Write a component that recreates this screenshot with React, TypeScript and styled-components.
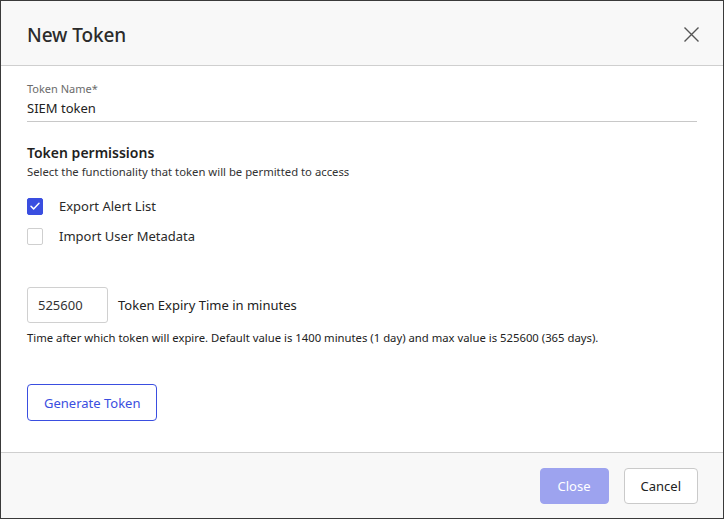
import React, { useState } from "react";
import styled, { createGlobalStyle } from "styled-components";

const GlobalStyle = createGlobalStyle`
  html, body {
    margin: 0;
    padding: 0;
    background: #ffffff;
  }
  body {
    font-family: "Noto Sans", "Open Sans", sans-serif;
    color: #222;
  }
`;

const Dialog = styled.div`
  box-sizing: border-box;
  width: 724px;
  height: 519px;
  border: 1px solid #3a3a3a;
  display: flex;
  flex-direction: column;
  background: #fff;
`;

const Header = styled.header`
  box-sizing: border-box;
  height: 65px;
  flex: none;
  background: #f8f8f8;
  border-bottom: 1px solid #cfcfcf;
  display: flex;
  align-items: center;
  justify-content: space-between;
  padding: 3px 20px 0 26px;
`;

const Title = styled.h1`
  margin: 0;
  font-size: 19px;
  font-weight: 500;
  color: #2b2b2b;
  letter-spacing: -0.1px;
`;

const CloseIcon = styled.button`
  border: none;
  background: transparent;
  padding: 0;
  width: 24px;
  height: 24px;
  display: flex;
  align-items: center;
  justify-content: center;
  cursor: pointer;
`;

const Body = styled.main`
  flex: 1;
  padding: 16px 26px 0 26px;
`;

const FieldLabel = styled.label`
  display: block;
  font-size: 11px;
  color: #6b6b6b;
  line-height: 14px;
`;

const UnderlineInput = styled.input`
  display: block;
  width: 100%;
  box-sizing: border-box;
  border: none;
  border-bottom: 1px solid #c8c8c8;
  font-family: inherit;
  font-size: 13px;
  color: #222;
  padding: 3px 0 4px;
  outline: none;
  background: transparent;
`;

const SectionTitle = styled.h2`
  margin: 22px 0 0;
  font-size: 14px;
  font-weight: 600;
  color: #1f1f1f;
  line-height: 18px;
`;

const SectionHint = styled.p`
  margin: 2px 0 0;
  font-size: 11.3px;
  color: #333;
  line-height: 15px;
`;

const CheckList = styled.div`
  margin-top: 18px;
  display: flex;
  flex-direction: column;
  gap: 12px;
`;

const CheckRow = styled.label`
  display: flex;
  align-items: center;
  gap: 16px;
  font-size: 13px;
  color: #2a2a2a;
  cursor: pointer;
  height: 18px;
`;

const Box = styled.span<{ $checked: boolean }>`
  box-sizing: border-box;
  width: 16px;
  height: 17px;
  border-radius: 2px;
  border: 1px solid ${(p) => (p.$checked ? "#3a4ee0" : "#cfcfcf")};
  background: ${(p) => (p.$checked ? "#3a4ee0" : "#fff")};
  display: flex;
  align-items: center;
  justify-content: center;
`;

const ExpiryRow = styled.div`
  margin-top: 42px;
  display: flex;
  align-items: center;
  gap: 10px;
`;

const NumberBox = styled.input`
  box-sizing: border-box;
  width: 81px;
  height: 36px;
  border: 1px solid #d0d0d0;
  border-radius: 3px;
  padding: 0 10px;
  font-family: inherit;
  font-size: 13px;
  color: #333;
  outline: none;
`;

const ExpiryLabel = styled.span`
  font-size: 13px;
  color: #222;
`;

const HelpText = styled.p`
  margin: 7px 0 0;
  font-size: 11.3px;
  color: #222;
  line-height: 15px;
`;

const OutlineButton = styled.button`
  margin-top: 39px;
  box-sizing: border-box;
  height: 37px;
  padding: 0 16px;
  border: 1px solid #3a4ee0;
  border-radius: 4px;
  background: #fff;
  color: #3a4ee0;
  font-family: inherit;
  font-size: 13px;
  cursor: pointer;
`;

const Footer = styled.footer`
  box-sizing: border-box;
  height: 66px;
  flex: none;
  background: #f8f8f8;
  border-top: 1px solid #cfcfcf;
  display: flex;
  align-items: center;
  justify-content: flex-end;
  gap: 15px;
  padding: 0 25px;
`;

const FooterButton = styled.button<{ $primary?: boolean }>`
  box-sizing: border-box;
  height: 36px;
  padding: 0 ${(p) => (p.$primary ? "17px" : "16px")};
  border-radius: 4px;
  border: 1px solid ${(p) => (p.$primary ? "#9da3ef" : "#cacaca")};
  background: ${(p) => (p.$primary ? "#9da3ef" : "#fff")};
  color: ${(p) => (p.$primary ? "#fff" : "#222")};
  font-family: inherit;
  font-size: 13px;
  cursor: pointer;
`;

const Check = () => (
  <svg width="12" height="12" viewBox="0 0 12 12" fill="none">
    <path d="M2 6.3l2.6 2.6L10 3.3" stroke="#fff" strokeWidth="1.5" strokeLinecap="round" strokeLinejoin="round" />
  </svg>
);

const permissions = [
  { id: "export", label: "Export Alert List" },
  { id: "import", label: "Import User Metadata" },
];

export default function App() {
  const [checked, setChecked] = useState<Record<string, boolean>>({ export: true, import: false });

  return (
    <>
      <GlobalStyle />
      <Dialog>
        <Header>
          <Title>New Token</Title>
          <CloseIcon aria-label="Close">
            <svg width="17" height="17" viewBox="0 0 17 17" fill="none">
              <path d="M1.5 1.5l14 14M15.5 1.5l-14 14" stroke="#555" strokeWidth="1.4" />
            </svg>
          </CloseIcon>
        </Header>

        <Body>
          <FieldLabel>Token Name*</FieldLabel>
          <UnderlineInput defaultValue="SIEM token" />

          <SectionTitle>Token permissions</SectionTitle>
          <SectionHint>Select the functionality that token will be permitted to access</SectionHint>

          <CheckList>
            {permissions.map((p) => (
              <CheckRow key={p.id} onClick={() => setChecked({ ...checked, [p.id]: !checked[p.id] })}>
                <Box $checked={checked[p.id]}>{checked[p.id] && <Check />}</Box>
                {p.label}
              </CheckRow>
            ))}
          </CheckList>

          <ExpiryRow>
            <NumberBox defaultValue="525600" />
            <ExpiryLabel>Token Expiry Time in minutes</ExpiryLabel>
          </ExpiryRow>
          <HelpText>
            Time after which token will expire. Default value is 1400 minutes (1 day) and max value is 525600 (365 days).
          </HelpText>

          <OutlineButton>Generate Token</OutlineButton>
        </Body>

        <Footer>
          <FooterButton $primary>Close</FooterButton>
          <FooterButton>Cancel</FooterButton>
        </Footer>
      </Dialog>
    </>
  );
}
